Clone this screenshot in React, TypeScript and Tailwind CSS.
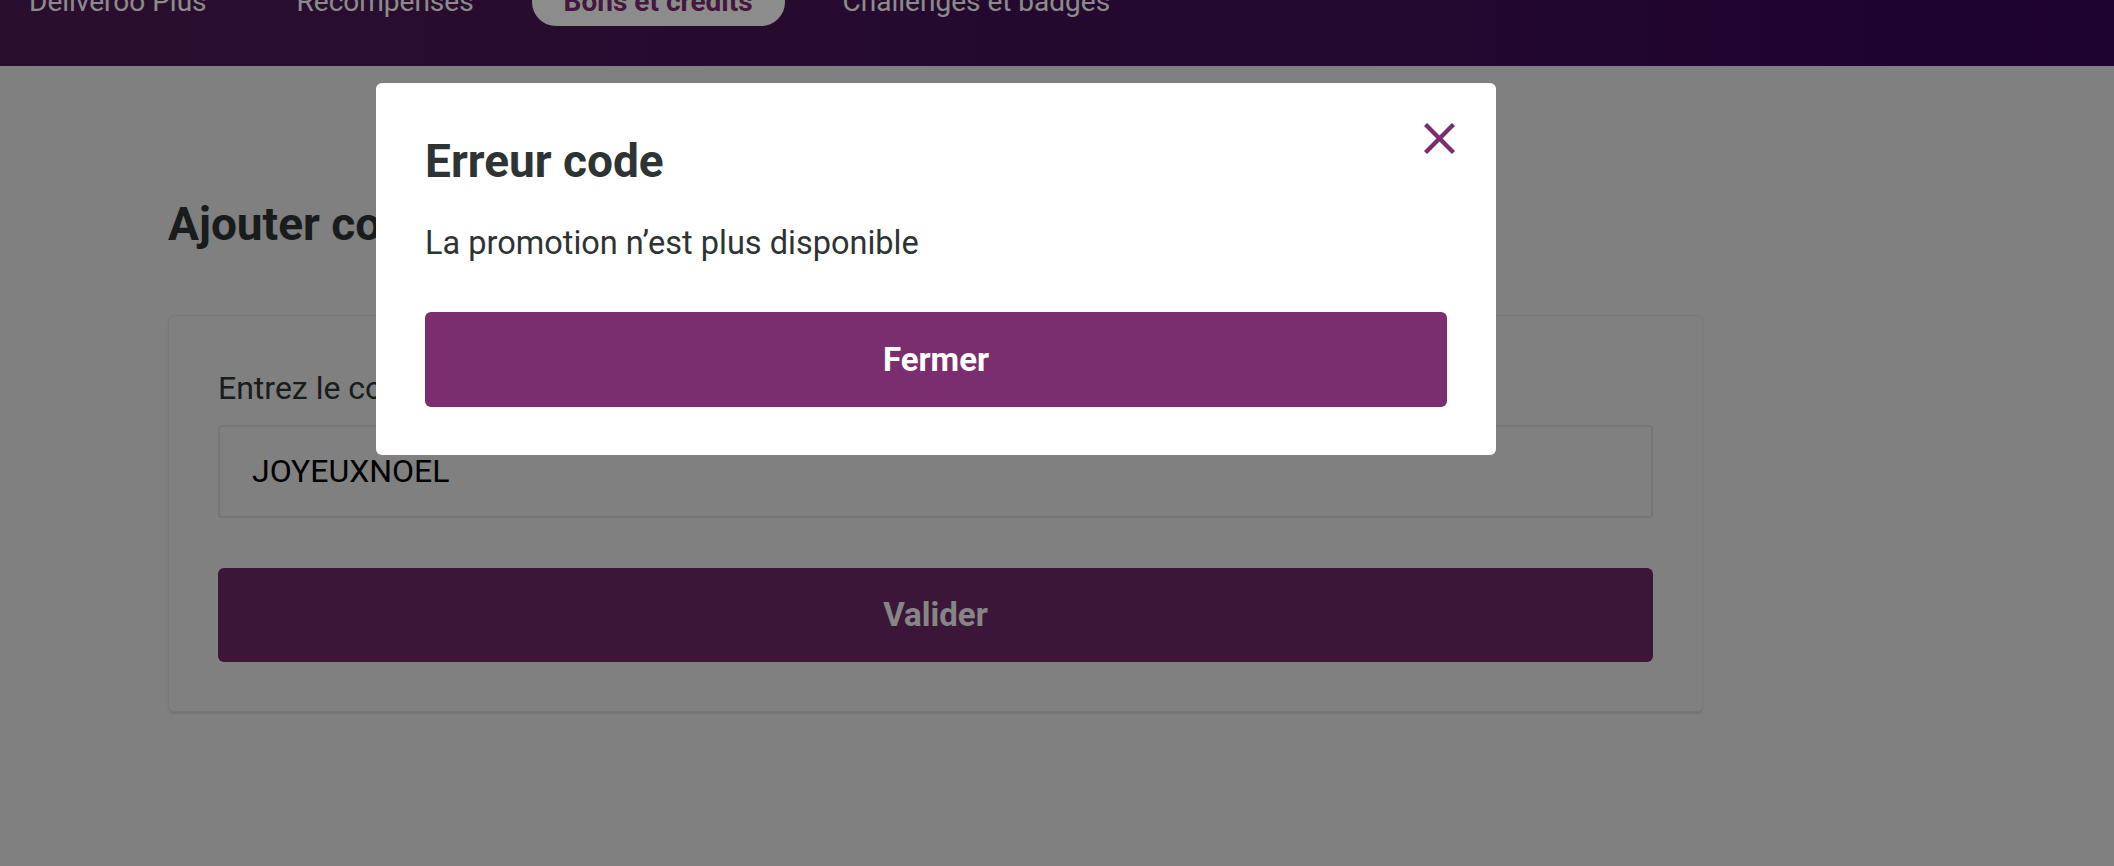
import React from "react";

const navItems = [
  { label: "Deliveroo Plus", active: false },
  { label: "Récompenses", active: false },
  { label: "Bons et crédits", active: true },
  { label: "Challenges et badges", active: false },
];

export default function App() {
  return (
    <div className="relative min-h-screen w-full overflow-hidden bg-[#e8e9e8] font-['Roboto','Noto_Sans',sans-serif] text-[#2e3333]">
      {/* Header */}
      <header className="h-[66px] w-full overflow-hidden bg-gradient-to-r from-[#4e1b55] to-[#380457]">
        <nav className="-mt-[15px] ml-[-3px] flex items-start gap-[26px]">
          {navItems.map((item) => (
            <div
              key={item.label}
              className={
                item.active
                  ? "rounded-b-[24px] bg-white px-[32px] pb-[7px] text-[28px] font-bold leading-[34px] text-[#7a2d6f]"
                  : "px-[32px] pb-[7px] text-[28px] leading-[34px] text-white"
              }
            >
              {item.label}
            </div>
          ))}
        </nav>
      </header>

      {/* Page content */}
      <main className="ml-[168px] mt-[132px] w-[1535px]">
        <h2 className="text-[46px] font-bold leading-[1.15] text-[#2e3333]">Ajouter code promo</h2>
        <section className="mt-[64px] rounded-[6px] border border-[#dadbda] bg-[#e9e9e9] px-[49px] pb-[49px] pt-[48px] shadow-[0_2px_2px_rgba(0,0,0,0.1)]">
          <label className="block text-[32px] leading-[48px] text-[#2e3333]">Entrez le code promo</label>
          <div className="mt-[13px] flex h-[93px] items-center rounded-[4px] border-2 border-[#d6d7d6] pl-[32px] text-[32px] text-black">
            JOYEUXNOEL
          </div>
          <button className="mt-[50px] flex h-[94px] w-full items-center justify-center rounded-[6px] bg-[#6d2866] text-[33px] font-bold text-[#f4f4f4]">
            Valider
          </button>
        </section>
      </main>

      {/* Backdrop */}
      <div className="absolute inset-0 bg-[rgba(0,0,0,0.45)]" />

      {/* Modal */}
      <div className="absolute left-[376px] top-[83px] w-[1120px] rounded-[6px] bg-white px-[49px] pb-[48px] pt-[52px]">
        <button className="absolute right-[41px] top-[40px] h-[31px] w-[31px] text-[#7a2d6f]" aria-label="Fermer">
          <svg viewBox="0 0 31 31" width="31" height="31" fill="none" stroke="currentColor" strokeWidth="4.4" strokeLinecap="butt">
            <line x1="1.5" y1="1.5" x2="29.5" y2="29.5" />
            <line x1="29.5" y1="1.5" x2="1.5" y2="29.5" />
          </svg>
        </button>
        <h2 className="text-[46px] font-bold leading-[1.15] text-[#2e3333]">Erreur code</h2>
        <p className="mt-[31px] text-[32.5px] leading-[48px] text-[#2e3333]">La promotion n’est plus disponible</p>
        <button className="mt-[45px] flex h-[95px] w-full items-center justify-center rounded-[6px] bg-[#7a2d6f] text-[33px] font-bold text-white">
          Fermer
        </button>
      </div>
    </div>
  );
}
